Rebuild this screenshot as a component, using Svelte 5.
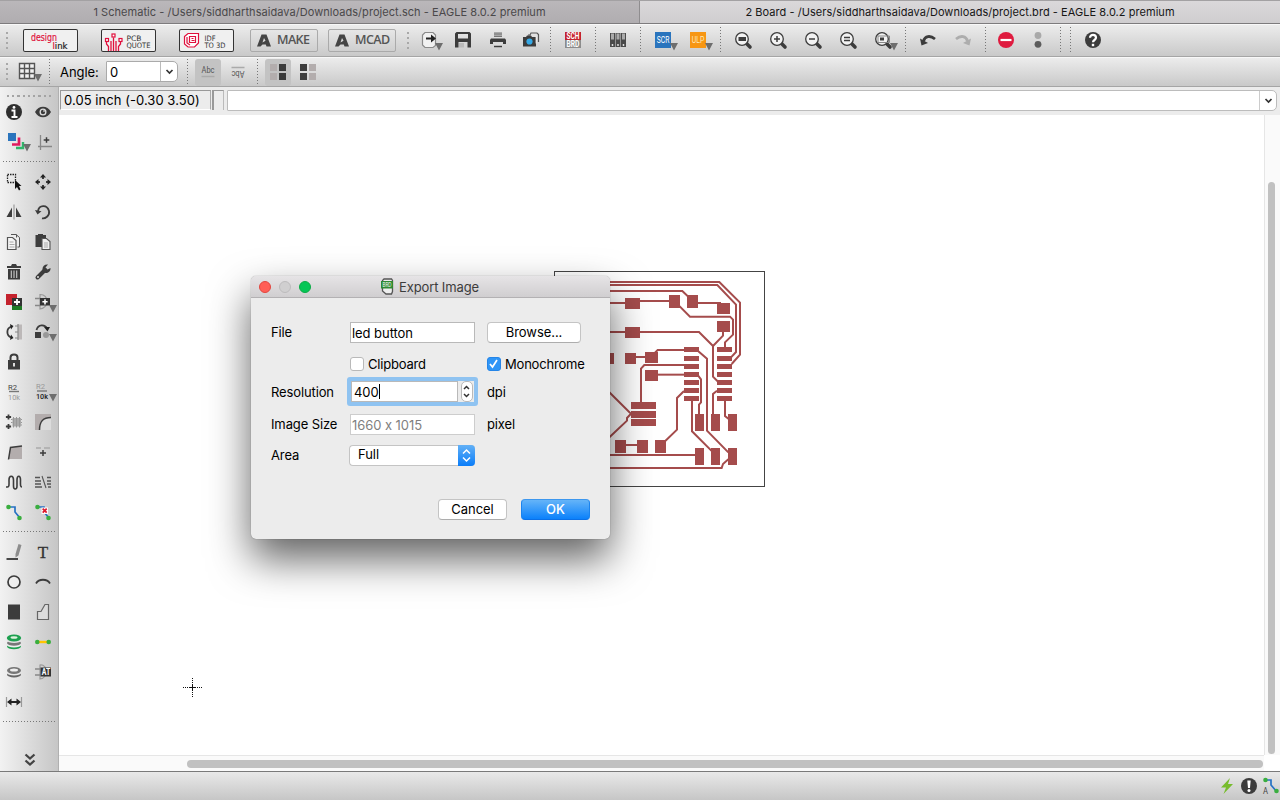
<script>
  const D = '#3c3c3c';
  const tip = (x, y) => `<path d="M${x} ${y}h8l-4 7.5z" fill="#6e6e6e"/>`;
  const tt = (x, y, s, w, c, t, b = 400) =>
    `<text x="${x}" y="${y}" font-size="${s}" textLength="${w}" lengthAdjust="spacingAndGlyphs" fill="${c}" font-weight="${b}" font-family="Roboto, sans-serif">${t}</text>`;
  const lens = (inner) =>
    `<path d="M3 3l4 4" stroke="${D}" stroke-width="3.6" stroke-linecap="round"/><circle cx="-1" cy="-1" r="6.3" fill="#f2f2f2" stroke="${D}" stroke-width="1.3"/>${inner}`;
  const plus = (x, y, r, w, c = D) => `<path d="M${x - r} ${y}h${2 * r}M${x} ${y - r}v${2 * r}" stroke="${c}" stroke-width="${w}" fill="none"/>`;
  const dot = (x, y) => `<circle cx="${x}" cy="${y}" r="2.3" fill="#3aae3f"/>`;

  const icons = {
    export: `<path d="M-5-7.5H3L5.500-5V5.500L3 7.500H-5L-7.500 5V-5z" fill="#f1f1f1" stroke="#8a8a8a" stroke-width="1.2"/><path d="M-4-1.500h6" stroke="#222" stroke-width="2"/><path d="M1-5.500l5 4-5 4z" fill="#222"/>${tip(5, 3)}`,
    save: `<path fill-rule="evenodd" d="M-6.500-8h13L8-6.500V7.500H-8v-14zM-5-6v4.500H5V-6zM-4.500 2v5.500H4.500V2z" fill="${D}"/><path d="M-4 3h5v4.500h-5z" fill="#bbb"/>`,
    print: `<path d="M-4-8h8v5h-8z" fill="#aaa"/><path d="M-4-6h8M-4-3.500h8" stroke="#777"/><path d="M-7-1.500H7L8 0v4H5V2H-5v2h-3V0z" fill="${D}"/><path d="M-4 3.500h8V7h-8z" fill="#ddd"/><path d="M-4 6.500h8" stroke="${D}" stroke-width="1.500"/>`,
    camera: `<path d="M-3-5h2l1-2h6l1.500 1.500V2" fill="none" stroke="#555" stroke-width="1.200"/><path d="M-8-3h3l1-1.500h4L1-3h4v9.500H-8z" fill="${D}"/><path d="M5-3.500v7" stroke="#fff" stroke-width=".7"/><circle cx="-1.500" cy="1.500" r="3.100" fill="#35a9e6"/>`,
    schbrd: `<path d="M-8-8H8v8H-8z" fill="#c4222d"/><path d="M-8 0H8v8H-8z" fill="#8c8c8c"/>${tt(-6.500, -1, 9, 13, '#fff', 'SCH', 700)}${tt(-6.500, 7.200, 9, 13, '#fff', 'BRD', 700)}`,
    library: [-8, -2.500, 3].map((x) => `<path d="M${x}-7h5v14h-5z" fill="#4a4a4a"/><path d="M${x + 1}-6.500h3v6h-3z" fill="#aaa"/><circle cx="${x + 2.500}" cy="5" r=".9" fill="#eee"/>`).join(''),
    scr: `<path d="M-8-8H8V8H-8z" fill="#2a74bd"/>${tt(-6.200, 3.300, 9.500, 12.500, '#fff', 'SCR')}${tip(7, 3)}`,
    ulp: `<path d="M-8-8H8V8H-8z" fill="#f79613"/>${tt(-6.200, 3.300, 9.500, 12.500, '#ffe9b8', 'ULP')}${tip(7, 3)}`,
    zfit: lens(`<path d="M-4.500-3h7.500v4h-7.500z" fill="${D}"/>`),
    zin: lens(plus(-1, -1, 3, 1.500)),
    zout: lens(`<path d="M-4-1h6" stroke="${D}" stroke-width="1.500"/>`),
    zredraw: lens(`<path d="M-4-2.500h6M-4 .5h6" stroke="${D}" stroke-width="1.300"/>`),
    zsel: lens(`<path d="M-5-4H6.500V2.500H-5z" fill="none" stroke="#888"/><path d="M-3-2.500h4v3h-4z" fill="${D}"/>`) + tip(7, 3),
    undo: `<path d="M-4.500 1C-3-4 2-5 7-1" fill="none" stroke="${D}" stroke-width="2.800"/><path d="M-8-1.500L-6.500 5.500 0 3z" fill="${D}"/>`,
    redo: `<path d="M4.500 1C3-4-2-5-7-1" fill="none" stroke="#adadad" stroke-width="2.800"/><path d="M8-1.500L6.500 5.500 0 3z" fill="#adadad"/>`,
    stop: `<circle r="8" fill="#df1b3f"/><path d="M-5.500 0h11" stroke="#fff" stroke-width="2.200"/>`,
    lights: `<circle cy="-4.500" r="3.400" fill="#a9a9a9"/><circle cy="4.300" r="3.400" fill="#5c5c5c"/>`,
    help: `<circle r="8" fill="${D}"/><path d="M-3-2.200C-3-6 3-6 3-2.200 3 0 0 0 0 2.200" fill="none" stroke="#fff" stroke-width="2.200"/><path d="M-1.200 3.800h2.400v2.400h-2.400z" fill="#fff"/>`,

    grid: `<path d="M-7.500-8.500H7.500V6.500H-7.500zM-7.500-3.500H7.500M-7.500 1.500H7.500M-2.500-8.500V6.500M2.500-8.500V6.500" fill="#f1f1f1" stroke="#555" stroke-width="1.400"/>${tip(7, 2)}`,
    abc: `${tt(-6.500, 1, 8.500, 13, '#555', 'Abc')}<path d="M-6.500 4.500h13" stroke="#aaa" stroke-width="1.500"/>`,
    abcFlip: `<g transform="rotate(180)">${tt(-6.500, 1.500, 8.500, 13, '#555', 'Abc')}<path d="M-6.500 4.500h13" stroke="#aaa" stroke-width="1.500"/></g>`,
    quadR: `<path d="M-8-8h7v7h-7zM-8 1h7v7h-7z" fill="#b3adad"/><path d="M1-8h7v7h-7zM1 1h7v7h-7z" fill="${D}"/>`,
    quadL: `<path d="M-8-8h7v7h-7zM-8 1h7v7h-7z" fill="${D}"/><path d="M1-8h7v7h-7zM1 1h7v7h-7z" fill="#b3adad"/>`,

    info: `<circle r="8" fill="#2f2f2f"/><path d="M-2.500-1.500H.5V4.500M-2.500 5h6" fill="none" stroke="#fff" stroke-width="1.900"/><circle cx="0" cy="-4.600" r="1.400" fill="#fff"/>`,
    eye: `<path d="M-8 0C-4.500-7 4.500-7 8 0 4.500 7-4.500 7-8 0z" fill="${D}"/><circle r="3.500" fill="#ddd"/><circle r="2.200" fill="${D}"/><circle cx="1" cy="-1" r=".8" fill="#fff"/>`,
    layers: `<path d="M-6-9H2v8h-8z" fill="#2a74bd"/><path d="M5-4.500V2.500h-7" fill="none" stroke="#df1b5f" stroke-width="2.700"/><path d="M9 0v6H2" fill="none" stroke="#30b56b" stroke-width="2.400"/>${tip(9, 2)}`,
    mark: `<path d="M-2.500-7V8M-5 4.500H9" stroke="#888" stroke-width="1.300"/>${plus(3.500, -2, 2.800, 1.500)}`,
    select: `<path d="M-6.500-7.500h8v8h-8z" fill="none" stroke="#222" stroke-width="1.300" stroke-dasharray="1.500 1"/><path d="M1-2v9l2-2 2 3.500 1.500-1L5 4h2.500z" fill="#111"/>`,
    move: `<path d="M-5 0h2M3 0h2M0-5v2M0 3v2" stroke="${D}" stroke-width="2"/><path d="M-8 0l3.500-3v6zM8 0L4.500-3v6zM0-8l-3 3.500h6zM0 8l-3-3.500h6z" fill="#222"/>`,
    mirror: `<path d="M-2-4.500V5h-5.500zM2-4.500V5h5.500z" fill="${D}"/><path d="M0-7.500v15" stroke="#aaa" stroke-width="1.500"/>`,
    rotate: `<path d="M-5-1C-4-7 4-8 6-1 7 4 2 7-1 6.300" fill="none" stroke="${D}" stroke-width="1.800"/><path d="M-8-2l2.500 4.500L-1.500-.8z" fill="${D}"/>`,
    copy: `<path d="M-3-7.500h5l3.500 3v9.500h-2M2.500-4.500V-7.500" fill="#eee" stroke="#555"/><path d="M-6.500-4.500h5l3.500 3v9h-8.500z" fill="#f5f5f5" stroke="#555" stroke-width="1.200"/><path d="M-4.500 0h4M-4.500 2.500h5M-4.500 5h5" stroke="#aaa"/>`,
    paste: `<path d="M-7.500-7H-5v-1h5v1h3V5h-10.500z" fill="${D}"/><path d="M-1-3.500h4.500l3.500 3v8h-8z" fill="#eee" stroke="#555" stroke-width="1.100"/><path d="M1 1h4M1 3h4M1 5h4" stroke="#aaa"/>`,
    trash: `<path d="M-7-6h4l1-2h4l1 2h4v2H-7zM-6-3H6V7.500H-6z" fill="${D}"/><path d="M-2.700-1.500V6M0-1.500V6M2.700-1.500V6" stroke="#ccc" stroke-width="1.100"/>`,
    wrench: `<path d="M-5.500 5.500L2-2" stroke="${D}" stroke-width="4" stroke-linecap="round"/><path d="M7.500-4C8 2-1 3-.5-3-.5-6 2-8 5-7.500L2.500-4.500 4.500-2.500z" fill="${D}"/><circle cx="-5" cy="5" r="1" fill="#ddd"/>`,
    add: `<path d="M-8-8H3V3H-8z" fill="#c4222d"/><path d="M-2 3H8v5H-2z" fill="#1f7a25"/><path d="M-2-4H8V4H-2z" fill="#333"/>${plus(3, 0, 3, 1.800, '#fff')}`,
    addGate: `<path d="M-3-7.500C6-8 7 6-3 7z" fill="none" stroke="#999" stroke-width="1.200"/><path d="M-8-3.500h5M-8 3.500h5" stroke="#888" stroke-width="1.300"/><path d="M-3-4H7V3.500H-3z" fill="#333"/>${plus(2, -.2, 2.600, 1.600, '#fff')}${tip(6, 3)}`,
    pinswap: `<path d="M-2.500-5.500C-8-4-8 4-2.500 5.500" fill="none" stroke="${D}" stroke-width="1.800"/><path d="M-4-8l3.500 2-2.500 3.500zM-4 8l3.500-2-2.500-3.500z" fill="#222"/><path d="M4-7.500h4v15h-4z" fill="#bcb8b8"/><path d="M4-8V8M1-6h3M1 0h3M1 6h3" stroke="#888" stroke-width="1.200"/>`,
    replace: `<path d="M-6.500-2C-5-8 2-8 4-3.500" fill="none" stroke="${D}" stroke-width="1.800"/><path d="M1-5h6L4.500-.5z" fill="#222"/><path d="M-8 0h6v6h-6z" fill="${D}"/><circle cx="3" cy="3" r="3" fill="#999"/>${tip(6, 2)}`,
    lock: `<path d="M-3.500-1v-3.500c0-4 7-4 7 0V-1" fill="none" stroke="${D}" stroke-width="2"/><path d="M-6-2H6V7.500H-6z" fill="${D}"/><path d="M0 1v3.500" stroke="#ddd" stroke-width="2"/>`,
    name: `${tt(-6, -2.500, 8, 9, '#444', 'R2')}<path d="M-5-.5H5" stroke="#777" stroke-width="1.400"/>${tt(-6, 7.800, 8, 12, '#999', '10k')}`,
    value: `${tt(-7, -3, 8, 9, '#999', 'R2')}<path d="M-6-1H4" stroke="#777" stroke-width="1.400"/>${tt(-7, 7, 8, 12, '#222', '10k', 500)}${tip(6, 2)}`,
    smash: `${plus(-5.500, -5, 2.600, 1.800)}${plus(-5.500, 4.500, 2.600, 1.800)}<path d="M-1.500-4H7V4.500h-8.500z" fill="#aaa"/><path d="M-.5-5v10.500M2.500-5v10.500M5.500-5v10.500M-3-2.500h1.500M-3 .5h1.500M7-2.500h1M7 .5h1M7 3h1" stroke="#999"/>`,
    miter: `<path d="M-8-8H8v16H-8z" fill="#b3adad"/><path d="M8-4.500C0-4.500-3.500-1-3.500 8H8z" fill="#dcdcdc"/><path d="M8-4.500C0-4.500-3.500-1-3.500 8" fill="none" stroke="${D}" stroke-width="1.500"/>`,
    split: `<path d="M-3.500-4.500L8-5.500V7H-5.500z" fill="#b3adad"/><path d="M-5.500 7.500L-3.500-4.500 8-6" fill="none" stroke="${D}" stroke-width="1.500"/>`,
    optimize: `<path d="M-7-4h5M1-4h6" stroke="#aaa" stroke-width="1.300"/>${plus(0, 1, 3, 1.500)}`,
    meander: `<path d="M-8 5h1.500c2 0 1.500-3 1.500-7 0-5 4.500-5 4.500 0v6c0 4 3.500 4 3.500 0V-2c0-5 3.500-5 3.500 0 0 4-.5 7 1.500 7" fill="none" stroke="${D}" stroke-width="1.600"/>`,
    ripdiff: `<path d="M-8-4.500h5M-8-1h6M-8 2h6M-8 5h7M4-4.500h4M4-1h4M4 2h4M5 5h3" stroke="#555" stroke-width="1.300"/><path d="M-1-6L3 6" stroke="#555" stroke-width="1.100"/>`,
    route: `<path d="M-5.500-5H1v5l5 6" fill="none" stroke="#2672c4" stroke-width="1.700"/>${dot(-5.500, -5)}${dot(5.500, 6)}`,
    ripup: `<path d="M-5.500-5H1v5l5 6" fill="none" stroke="#2672c4" stroke-width="1.700"/>${dot(-5.500, -5)}${dot(5.500, 6)}<path d="M-1.500-4.500h6.500v6.500h-6.500z" fill="#fff"/><path d="M-.3-3.300l4 4M3.700-3.300l-4 4" stroke="#df1b2f" stroke-width="1.800"/>`,
    line: `<path d="M-7.500 7H4" stroke="#111" stroke-width="1.500"/><path d="M4.500-8l3 1L4.500 3.500l-3 2v-3.500z" fill="#8d8d8d"/>`,
    text: `<text x="-5.300" y="6" font-size="17" font-family="Liberation Serif, serif" fill="#333" stroke="#333" stroke-width=".3">T</text>`,
    circle: `<circle r="6" fill="#f4f4f4" fill-opacity=".5" stroke="${D}" stroke-width="1.700"/>`,
    arc: `<path d="M-7 1.500C-4-3.500 4-3.500 7 1.500" fill="none" stroke="${D}" stroke-width="1.800"/>`,
    rect: `<path d="M-6-7.500H6v15H-6z" fill="${D}"/>`,
    polygon: `<path d="M-5.500-.5h3.500L2-7.500h3.500v15h-11z" fill="#dcdcdc" stroke="#666" stroke-width="1.200"/>`,
    via: `<ellipse cy="4.500" rx="7" ry="2.800" fill="#1da04f"/><ellipse cy="3" rx="7" ry="2.400" fill="#eee"/><ellipse cy="1" rx="7" ry="2.800" fill="#777"/><ellipse cy="-1.500" rx="7" ry="2.500" fill="#e4e4e4"/><ellipse cy="-4" rx="7.200" ry="3.500" fill="#1da04f"/><ellipse cy="-4.500" rx="3.500" ry="1.300" fill="#dff3df"/>`,
    signal: `<path d="M-5 0H5" stroke="#ffc400" stroke-width="2.400"/>${dot(-5.700, 0)}${dot(5.700, 0)}`,
    hole: `<ellipse cy="2.500" rx="7" ry="3" fill="#666"/><ellipse cy="1" rx="7" ry="2.500" fill="#e8e8e8"/><ellipse cy="-1.500" rx="7" ry="3.500" fill="#777"/><ellipse cy="-2" rx="4" ry="1.500" fill="#eee"/>`,
    attr: `<path d="M-3-7C5-8 6 6-3 7z" fill="none" stroke="#999" stroke-width="1.200"/><path d="M-8-3h5M-8 3h5" stroke="#888" stroke-width="1.300"/><path d="M-2.500-4.500H8V4.500H-2.500z" fill="#333"/>${tt(-1.300, 3.200, 9, 8.500, '#fff', 'AT', 700)}`,
    dimension: `<path d="M-7.500-5V5M7.500-5V5" stroke="#999" stroke-width="1.200"/><path d="M-4 0h8" stroke="#222" stroke-width="2"/><path d="M-7 0l4.500-3.500v7zM7 0L2.500-3.500v7z" fill="#222"/>`,
    more: `<path d="M-4.500-5.500L0-1.500l4.500-4M-4.500 .5L0 4.500l4.500-4" fill="none" stroke="#444" stroke-width="2.300"/>`,
    bolt: `<path d="M3-8L-6 1.500h5L-3.500 8 6-2H1z" fill="#77bc2d"/>`,
    alert: `<circle r="8" fill="${D}"/><path d="M-1.700-5.500h3.400L1 2h-2z" fill="#fff"/><circle cy="4.500" r="1.500" fill="#fff"/>`,
    autoroute: `<path d="M-5-6H0v5l6 7" fill="none" stroke="#2672c4" stroke-width="1.700"/>${dot(-5.500, -6)}${dot(5.500, 5)}${tt(-8, 7.500, 9, 5, '#444', 'A')}`
  };

  // name, slot width, leading space; '|' marks a dotted separator
  const tools = [
    ['export', 33, 6], ['save', 35, 6], ['print', 35, 6], ['camera', 30, 4], '|',
    ['schbrd', 35, 6], '|', ['library', 35, 6], '|', ['scr', 35, 6], ['ulp', 35, 6], '|',
    ['zfit', 35, 6], ['zin', 35, 6], ['zout', 35, 6], ['zredraw', 35, 6], ['zsel', 35, 6], '|',
    ['undo', 35, 6], ['redo', 35, 6], '|', ['stop', 32, 4], ['lights', 33, 4], '|', '|', ['help', 35, 6]
  ];

  const palette = [
    ['info', 'eye', 'layers', 'mark'],
    ['select', 'move', 'mirror', 'rotate', 'copy', 'paste', 'trash', 'wrench', 'add', 'addGate', 'pinswap', 'replace', 'lock', '', 'name', 'value', 'smash', 'miter', 'split', 'optimize', 'meander', 'ripdiff', 'route', 'ripup'],
    ['line', 'text', 'circle', 'arc', 'rect', 'polygon', 'via', 'signal', 'hole', 'attr', 'dimension', '']
  ];

  const pinRows = [249, 276, 300, 324, 348, 372, 396];
  const pads = [
    [240, 102, 45, 33], [372, 93, 33, 39], [426, 93, 33, 39], [516, 117, 39, 33], [516, 171, 39, 33],
    [240, 189, 45, 33], [174, 267, 33, 33], [240, 267, 33, 33], [300, 264, 39, 33], [300, 318, 39, 33],
    [258, 414, 75, 21], [258, 441, 75, 21], [258, 465, 75, 21],
    [210, 528, 33, 39], [276, 528, 33, 39], [330, 528, 33, 39],
    ...[450, 498, 549].flatMap((x) => [[x, 450, 27, 51], [x, 552, 27, 51]]),
    ...pinRows.flatMap((y) => [[417, y, 45, 15], [516, y, 45, 15]])
  ];
  const traces = [
    '190,54 523,54 585,116 585,272 560,300', '190,63 517,63 573,122 573,264 558,280', '190,81 412,81 430,98',
    '190,117 240,117', '285,111 372,111', '459,117 525,117 525,122', '402,125 435,158 555,158 564,167 564,212 540,235 540,250',
    '534,204 534,215 504,246', '190,204 240,204', '285,204 462,204 504,246 504,338 520,354',
    '273,279 300,279', '330,266 338,258 417,258', '460,262 486,284 486,500 550,565',
    '417,303 298,303 288,314 288,414', '339,332 417,332', '460,336 468,346 468,415 462,422 462,450',
    '190,382 258,449 246,462 246,470 190,523', '243,543 276,543', '360,532 396,497 396,402 417,381',
    '441,411 441,502 502,563', '516,380 504,390 504,450', '540,411 540,456 552,466',
    '190,573 450,573', '190,612 530,612 534,600 550,586'
  ];
</script>

{#snippet icon(name)}
  <svg class="icon" width="24" height="24" viewBox="-12 -12 24 24">{@html icons[name] ?? ''}</svg>
{/snippet}

{#snippet adesk()}
  <svg width="14" height="13" viewBox="0 0 14 13"><path fill-rule="evenodd" d="M0 12.500L4.500 .5H9.500L14 12.500H9.500L8.800 10.500H5.500L3.500 12.500zM7 4L5.500 8.500l3-1.700z" fill="#444" /></svg>
{/snippet}

<div class="window">
  <div class="tabs">
    <div class="tab"><span>1 Schematic - /Users/siddharthsaidava/Downloads/project.sch - EAGLE 8.0.2 premium</span></div>
    <div class="tab active"><span>2 Board - /Users/siddharthsaidava/Downloads/project.brd - EAGLE 8.0.2 premium</span></div>
  </div>

  <div class="bar main">
    <div class="grip"></div>
    <div class="badges">
      <svg class="badge" width="55" height="23" viewBox="0 0 55 23">
        <text x="8" y="11.500" font-size="10" textLength="26" lengthAdjust="spacingAndGlyphs" fill="#e0103c" stroke="#e0103c" stroke-width=".2">design</text>
        <text x="29.500" y="19.500" font-size="8.500" textLength="15" lengthAdjust="spacingAndGlyphs" fill="#222" stroke="#222" stroke-width=".2"><tspan fill="#e0103c" stroke="#e0103c">l</tspan>ink</text>
      </svg>
      <svg class="badge" width="55" height="23" viewBox="0 0 55 23">
        <path d="M7.500 22v-4.500L5.500 15v-2M10 22V12M12.500 22V8.500M15 22V12M17.500 22v-4.500l2-2.500v-2" fill="none" stroke="#e0103c" stroke-width="1.300" />
        <g fill="#fff" stroke="#e0103c" stroke-width="1.200"><rect x="4.500" y="9.500" width="3" height="3" /><rect x="11" y="5" width="3" height="3" /><rect x="18" y="9.500" width="3" height="3" /></g>
        <text x="25.500" y="11.500" font-size="7.500" textLength="15" lengthAdjust="spacingAndGlyphs" fill="#333">PCB</text>
        <text x="25.500" y="19" font-size="7.500" textLength="24" lengthAdjust="spacingAndGlyphs" fill="#333">QUOTE</text>
      </svg>
      <svg class="badge" width="55" height="23" viewBox="0 0 55 23">
        <path d="M5.500 7.500L9 4.500H19.500V14L15.500 18H9L5.500 15zM8 8v6l3 2M10.500 7.500h6v6h-6zM12.500 9.500h2M12.500 11.500h3" fill="#fff" stroke="#e0103c" stroke-width="1.200" />
        <text x="25.500" y="11.500" font-size="7.500" textLength="11" lengthAdjust="spacingAndGlyphs" fill="#333">IDF</text>
        <text x="25.500" y="19" font-size="7.500" textLength="21" lengthAdjust="spacingAndGlyphs" fill="#333">TO 3D</text>
      </svg>
    </div>
    <div class="cad">{@render adesk()}<span>MAKE</span></div>
    <div class="cad">{@render adesk()}<span>MCAD</span></div>
    <div class="grip second"></div>
    {#each tools as t}
      {#if t === '|'}
        <div class="sep"></div>
      {:else}
        <div class="tool" style="width:{t[1]}px;padding-left:{t[2]}px">{@render icon(t[0])}</div>
      {/if}
    {/each}
  </div>

  <div class="bar params">
    <div class="grip"></div>
    <div class="gridbtn">{@render icon('grid')}</div>
    <div class="sep"></div>
    <span class="angle">Angle:</span>
    <div class="combo"><span>0</span><i><svg width="9" height="6" viewBox="0 0 9 6"><path d="M1.500 1l3 3 3-3" fill="none" stroke="#333" stroke-width="1.700" /></svg></i></div>
    <div class="sep wide"></div>
    <div class="toggle on">{@render icon('abc')}</div>
    <div class="toggle">{@render icon('abcFlip')}</div>
    <div class="sep late"></div>
    <div class="toggle on">{@render icon('quadR')}</div>
    <div class="toggle">{@render icon('quadL')}</div>
  </div>

  <div class="work">
    <aside>
      <div class="dots"></div>
      {#each palette as group}
        <div class="group">
          {#each group as name}<div class="slot">{@render icon(name)}</div>{/each}
        </div>
        <div class="rule"></div>
      {/each}
      <div class="more">{@render icon('more')}</div>
    </aside>

    <div class="pane">
      <div class="cmd">
        <div class="coords">0.05 inch (-0.30 3.50)</div>
        <div class="stub"></div>
        <div class="entry"><span></span><i><svg width="9" height="6" viewBox="0 0 9 6"><path d="M1.500 1l3 3 3-3" fill="none" stroke="#333" stroke-width="1.700" /></svg></i></div>
      </div>
      <div class="view">
        <svg class="canvas" width="1205" height="640" viewBox="59 115 1205 640">
          <g transform="translate(545 264) scale(.33333)">
            {#each traces as p}<polyline points={p} fill="none" stroke="#a54c4c" stroke-width="6" />{/each}
            {#each pads as [x, y, w, h]}<rect {x} {y} width={w} height={h} fill="#a54c4c" shape-rendering="crispEdges" />{/each}
          </g>
          <rect x="554.500" y="271.500" width="210" height="215" fill="none" stroke="#444" />
          <path d="M183 687.500h19M192.500 678v19" stroke="#111" stroke-dasharray="1 1" />
          <path d="M190 687.500h5M192.500 685v5" stroke="#111" />
        </svg>
        <div class="vscroll"><div></div></div>
        <div class="hscroll"><div></div></div>
      </div>
    </div>
  </div>

  <div class="status">
    {@render icon('bolt')}{@render icon('alert')}{@render icon('autoroute')}
  </div>

  <div class="dialog">
    <header>
      <div class="lights"><b class="r"></b><b class="n"></b><b class="g"></b></div>
      <svg class="icon" width="14" height="17" viewBox="0 0 14 17"><path d="M4 1h7.500l1 1.500v11L11.500 16H6L2.500 13V2.500z" fill="#eee" stroke="#555" stroke-width="1.300" /><path d="M1 3h12v7.500H1z" fill="#2f8a34" /><text x="2.500" y="9" font-size="6" textLength="9" lengthAdjust="spacingAndGlyphs" fill="#fff">BRD</text></svg>
      <span>Export Image</span>
    </header>
    <div class="form">
      <span>File</span><div class="field">led button</div><div class="btn browse">Browse...</div>
      <span></span><div class="check"><i></i>Clipboard</div>
      <div class="check"><i class="ticked"><svg width="13" height="13" viewBox="0 0 13 13"><path d="M3 7l2.500 3L10 3" fill="none" stroke="#fff" stroke-width="1.700" /></svg></i>Monochrome</div>
      <span>Resolution</span>
      <div class="spin"><div class="num">400<u></u></div><div class="step"><svg width="11" height="21" viewBox="0 0 11 21"><path d="M3 8l2.500-2.500L8 8M3 13l2.500 2.500L8 13" fill="none" stroke="#333" stroke-width="1.500" /></svg></div></div>
      <span>dpi</span>
      <span>Image Size</span><div class="field dim">1660 x 1015</div><span>pixel</span>
      <span class="area">Area</span>
      <div class="popup"><span>Full</span><i><svg width="17" height="21" viewBox="0 0 17 21"><path d="M5 8.500l3.500-3.500L12 8.500M5 12.500l3.500 3.500L12 12.500" fill="none" stroke="#fff" stroke-width="1.500" /></svg></i></div>
    </div>
    <footer><div class="btn cancel">Cancel</div><div class="btn ok">OK</div></footer>
  </div>
</div>

<style>
  .window { position: relative; width: 1280px; height: 800px; overflow: hidden; display: flex; flex-direction: column; background: #ececec; font: 13px/16px Inter, "Liberation Sans", sans-serif; font-feature-settings: "calt" 0; letter-spacing: -.06px; color: #000; }
  .window, .window :global(*) { box-sizing: border-box; }
  svg { display: block; flex: none; letter-spacing: 0; }
  .icon { overflow: visible; }
  span { white-space: nowrap; }

  .tabs { display: grid; grid-template-columns: 640px 640px; height: 24px; border-bottom: 1px solid #7d7b7d; border-top: 1px solid #a3a1a3; flex: none; }
  .tab { display: flex; justify-content: center; align-items: center; background: linear-gradient(#bab7ba, #b0adb0); color: #4a484a; font-size: 11px; letter-spacing: .05px; border-right: 1px solid #8f8d8f; }
  .tab.active { background: linear-gradient(#dad8da, #cfcdcf); color: #161616; border: 0; }

  .bar { display: flex; align-items: center; flex: none; background: linear-gradient(#ececec, #c9c9c9); border-top: 1px solid #f8f8f8; border-bottom: 1px solid #a5a5a5; }
  .main { height: 33px; }
  .params { height: 30px; }
  .grip { width: 2px; height: 18px; margin-left: 6px; background: repeating-linear-gradient(#a8a8a8 0 2px, transparent 2px 5px); }
  .grip.second { margin: 0 3px 0 11px; }
  .sep { width: 10px; height: 27px; flex: none; background: repeating-linear-gradient(#777 0 1px, transparent 1px 3px) 5px 0 / 1px 100% no-repeat; }
  .badges { display: flex; gap: 23px; margin: 0 16px 0 15px; }
  .badge { border-radius: 2px; background: #f0f0f0; box-shadow: inset 0 0 0 1px #333; font-family: "DejaVu Sans", sans-serif; }
  .cad { display: flex; align-items: center; gap: 6px; width: 68px; height: 23px; margin-right: 10px; padding: 0 0 1px 6px; border: 1px solid #aaa; border-radius: 2px; font: 600 12.5px/16px "Open Sans", sans-serif; color: #555; letter-spacing: -.6px; }
  .cad + .cad { margin-right: 0; }
  .tool { flex: none; margin-top: -1px; }

  .gridbtn { margin: 0 2px 0 7px; width: 27px; height: 24px; }
  .angle { margin-left: 6px; width: 46px; }
  .combo { display: flex; align-items: center; width: 72px; height: 21px; background: #fff; border: 1px solid #aaa; border-radius: 1px 5px 5px 1px; padding-left: 3px; margin-bottom: 1px; }
  .combo span { flex: 1; }
  .combo i { width: 17px; height: 100%; display: grid; place-items: center; border-left: 1px solid #bbb; }
  .sep.wide { width: 17px; background-position: 9px 0; }
  .toggle { width: 26px; height: 27px; display: grid; place-items: center; border-radius: 3px; margin-right: 4px; }
  .toggle.on { background: #c3c3c3; }
  .sep.late { width: 10px; background-position: 2px 0; }

  .work { display: flex; height: 684px; flex: none; }
  aside { width: 59px; flex: none; background: linear-gradient(90deg, #f2f2f2, #c6c6c6); border-right: 1px solid #b0b0b0; }
  .dots { height: 10px; padding: 8px 0 0 7px; }
  .dots::after { content: ""; display: block; width: 45px; height: 2px; background: repeating-linear-gradient(90deg, #a4a4a4 0 2px, transparent 2px 5.25px); }
  .group { display: grid; grid-template-columns: 29px 29px; grid-auto-rows: 30px; }
  .slot { padding: 3px 0 0 2px; }
  .rule { height: 10px; padding: 4px 2px 0 3px; }
  .rule::after { content: ""; display: block; height: 1px; background: repeating-linear-gradient(90deg, #777 0 1px, transparent 1px 3px); }
  .more { display: flex; justify-content: center; padding: 21px 0 0 1px; }

  .pane { flex: 1; display: flex; flex-direction: column; }
  .cmd { display: flex; height: 28px; padding: 3px 3px 0 1px; background: #ececec; flex: none; }
  .coords { width: 151px; height: 20px; border: 1px solid #999; border-right-color: #aaa; border-bottom-color: #fff; padding: 1px 3px; letter-spacing: .05px; }
  .stub { width: 12px; height: 20px; margin: 0 3px 0 1px; border-left: 2px solid #999; border-top: 1px solid #999; border-right: 1px solid #bbb; }
  .entry { flex: 1; display: flex; height: 21px; background: #fff; border: 1px solid #bcbcbc; border-radius: 1px 5px 5px 1px; }
  .entry span { flex: 1; }
  .entry i { width: 17px; display: grid; place-items: center; border-left: 1px solid #ccc; }
  .view { display: grid; grid-template-columns: 1205px 16px; grid-template-rows: 640px 16px; background: #fff; }
  .vscroll { background: #fafafa; border-left: 1px solid #e6e6e6; padding: 67px 5px 0 3px; }
  .vscroll div { width: 7px; height: 572px; border-radius: 4px; background: #c1c1c1; }
  .hscroll { background: #fafafa; border-top: 1px solid #e6e6e6; padding: 4px 0 0 128px; }
  .hscroll div { width: 1076px; height: 8px; border-radius: 4px; background: #c1c1c1; }

  .status { flex: 1; display: flex; align-items: center; justify-content: flex-end; background: linear-gradient(#e9e9e9, #c6c6c6); border-top: 1px solid #7a7a7a; padding-bottom: 1px; }
  .status .icon { margin-left: -2px; }
  .status .icon:last-child { margin-right: -3px; }

  .dialog { position: absolute; left: 251px; top: 276px; width: 359px; height: 263px; border-radius: 5px; background: #ececec; box-shadow: 0 0 1px rgba(0, 0, 0, .5), 0 20px 42px rgba(0, 0, 0, .62); }
  header { height: 22px; display: flex; align-items: center; border-radius: 5px 5px 0 0; background: linear-gradient(#e6e4e6, #d0ced0); border-bottom: 1px solid #b3b1b3; color: #3c3c3c; }
  header span { margin-left: 5px; letter-spacing: -.12px; }
  .lights { display: flex; gap: 8px; padding-left: 8px; width: 129px; }
  .lights b { width: 12px; height: 12px; border-radius: 50%; background: #ff5f57; border: 1px solid #e2463f; }
  .lights .n { background: #d0cfd0; border-color: #bdbcbd; }
  .lights .g { background: #05c656; border-color: #0cab46; }
  .form { display: grid; grid-template-columns: 79px 137px 110px; grid-template-rows: 31px 32px 25px 39px 22px; align-items: center; padding: 19px 0 0 20px; }
  .form > span { padding-bottom: 2px; letter-spacing: -.12px; }
  .form > .area { padding-bottom: 0; }
  .field { width: 125px; height: 21px; background: #fff; border: 1px solid #b9b9b9; padding: 2px 1px; }
  .dim { color: #7f7f7f; border-color: #cdcdcd; }
  .btn { height: 21px; display: flex; align-items: center; justify-content: center; padding-bottom: 2px; background: #fff; border: 1px solid #c4c4c4; border-bottom-color: #adadad; border-radius: 4px; }
  .browse { width: 94px; }
  .check { display: flex; align-items: center; gap: 4px; letter-spacing: -.2px; }
  .check i { width: 14px; height: 14px; border: 1px solid #b9b9b9; border-radius: 3px; background: #fff; }
  .check .ticked { background: #2f95f6; border-color: #2585e8; }
  .check .ticked svg { margin: -1px; }
  .spin { display: flex; width: 131px; height: 29px; margin: -2px 0 0 -3px; border: 4px solid #8fc3f1; border-radius: 3px; background: #ececec; }
  .num { display: flex; align-items: center; width: 107px; height: 21px; background: #fff; border: 1px solid #b9b9b9; padding-left: 2px; }
  .num u { width: 1px; height: 15px; background: #000; }
  .step { width: 12px; height: 21px; margin-left: 3px; border: 1px solid #b9b9b9; border-radius: 5px; background: #fff; }
  .step svg { margin: -1px; }
  .popup { display: flex; width: 126px; height: 21px; margin-left: -1px; background: #fff; border: 1px solid #c4c4c4; border-right: 0; border-radius: 4px; }
  .popup span { flex: 1; padding-left: 8px; line-height: 17px; }
  .popup i { width: 17px; height: 21px; margin-top: -1px; border-radius: 0 4px 4px 0; background: linear-gradient(#62b0f6, #0a7df9); }
  footer { display: flex; gap: 14px; padding: 33px 0 0 187px; }
  .cancel { width: 69px; }
  .ok { width: 69px; color: #fff; border-color: #3d97ee #1a83ee #0a70e8; background: linear-gradient(#65b4f8, #0b81fb); font-weight: 500; }
</style>
